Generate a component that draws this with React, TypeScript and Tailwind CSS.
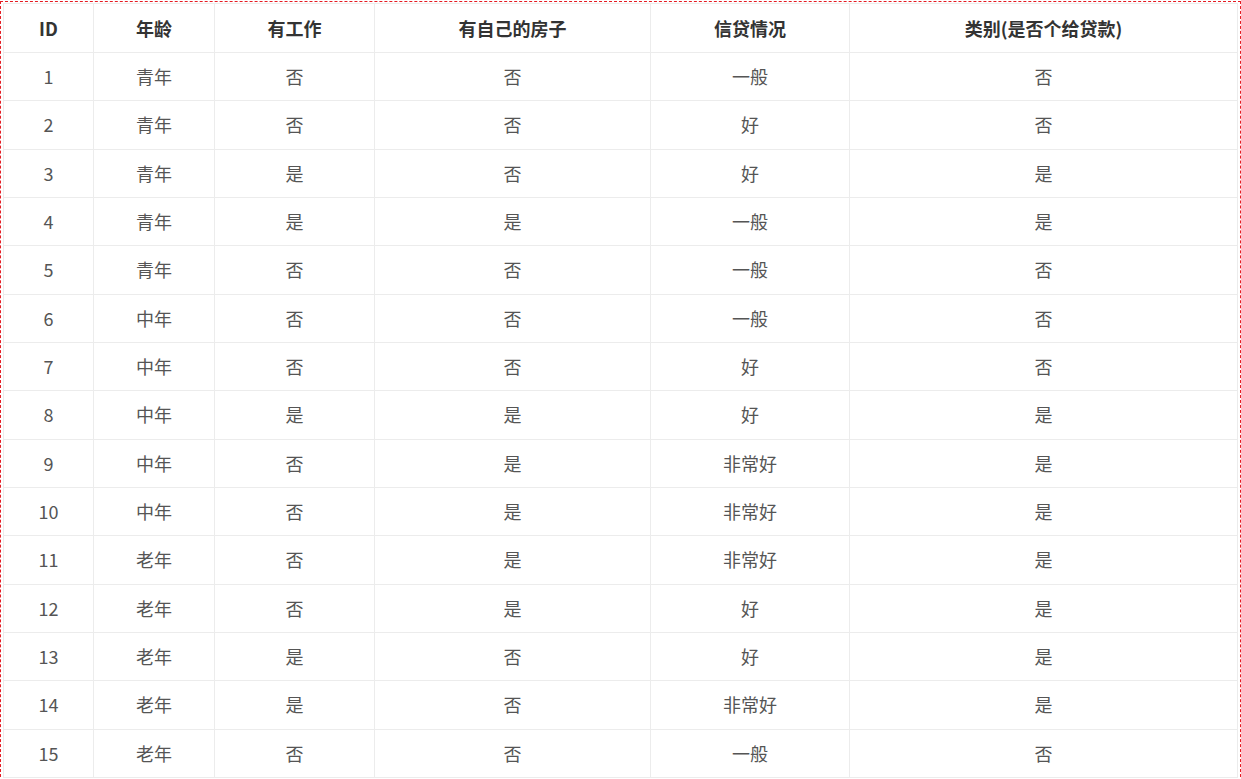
const HEAD = ['ID', '年龄', '有工作', '有自己的房子', '信贷情况', '类别(是否个给贷款)']

const WIDTHS = ['w-[90px]', 'w-[121px]', 'w-[160px]', 'w-[276px]', 'w-[199px]', 'w-[388px]']

const ROWS: string[][] = [
  ['1', '青年', '否', '否', '一般', '否'],
  ['2', '青年', '否', '否', '好', '否'],
  ['3', '青年', '是', '否', '好', '是'],
  ['4', '青年', '是', '是', '一般', '是'],
  ['5', '青年', '否', '否', '一般', '否'],
  ['6', '中年', '否', '否', '一般', '否'],
  ['7', '中年', '否', '否', '好', '否'],
  ['8', '中年', '是', '是', '好', '是'],
  ['9', '中年', '否', '是', '非常好', '是'],
  ['10', '中年', '否', '是', '非常好', '是'],
  ['11', '老年', '否', '是', '非常好', '是'],
  ['12', '老年', '否', '是', '好', '是'],
  ['13', '老年', '是', '否', '好', '是'],
  ['14', '老年', '是', '否', '非常好', '是'],
  ['15', '老年', '否', '否', '一般', '否'],
]

export default function App() {
  return (
    <div className="min-h-screen bg-white">
      <div
        className="mt-px border border-dashed border-[#e51c23] pl-[2px] pr-[2px] pt-[1px] pb-2"
        style={{ fontFamily: '"Noto Sans CJK SC", "Noto Sans", sans-serif' }}
      >
        <table className="w-[1234px] table-fixed border-collapse text-[18px]">
          <colgroup>
            {WIDTHS.map((w, i) => (
              <col key={i} className={w} />
            ))}
          </colgroup>
          <thead>
            <tr>
              {HEAD.map((h) => (
                <th
                  key={h}
                  className="h-[49px] border border-[#ececec] p-0 text-center align-middle font-bold text-[#333]"
                >
                  {h}
                </th>
              ))}
            </tr>
          </thead>
          <tbody>
            {ROWS.map((r) => (
              <tr key={r[0]}>
                {r.map((c, i) => (
                  <td
                    key={i}
                    className="h-[48.33px] border border-[#ececec] p-0 text-center align-middle text-[#555]"
                  >
                    {c}
                  </td>
                ))}
              </tr>
            ))}
          </tbody>
        </table>
      </div>
    </div>
  )
}
